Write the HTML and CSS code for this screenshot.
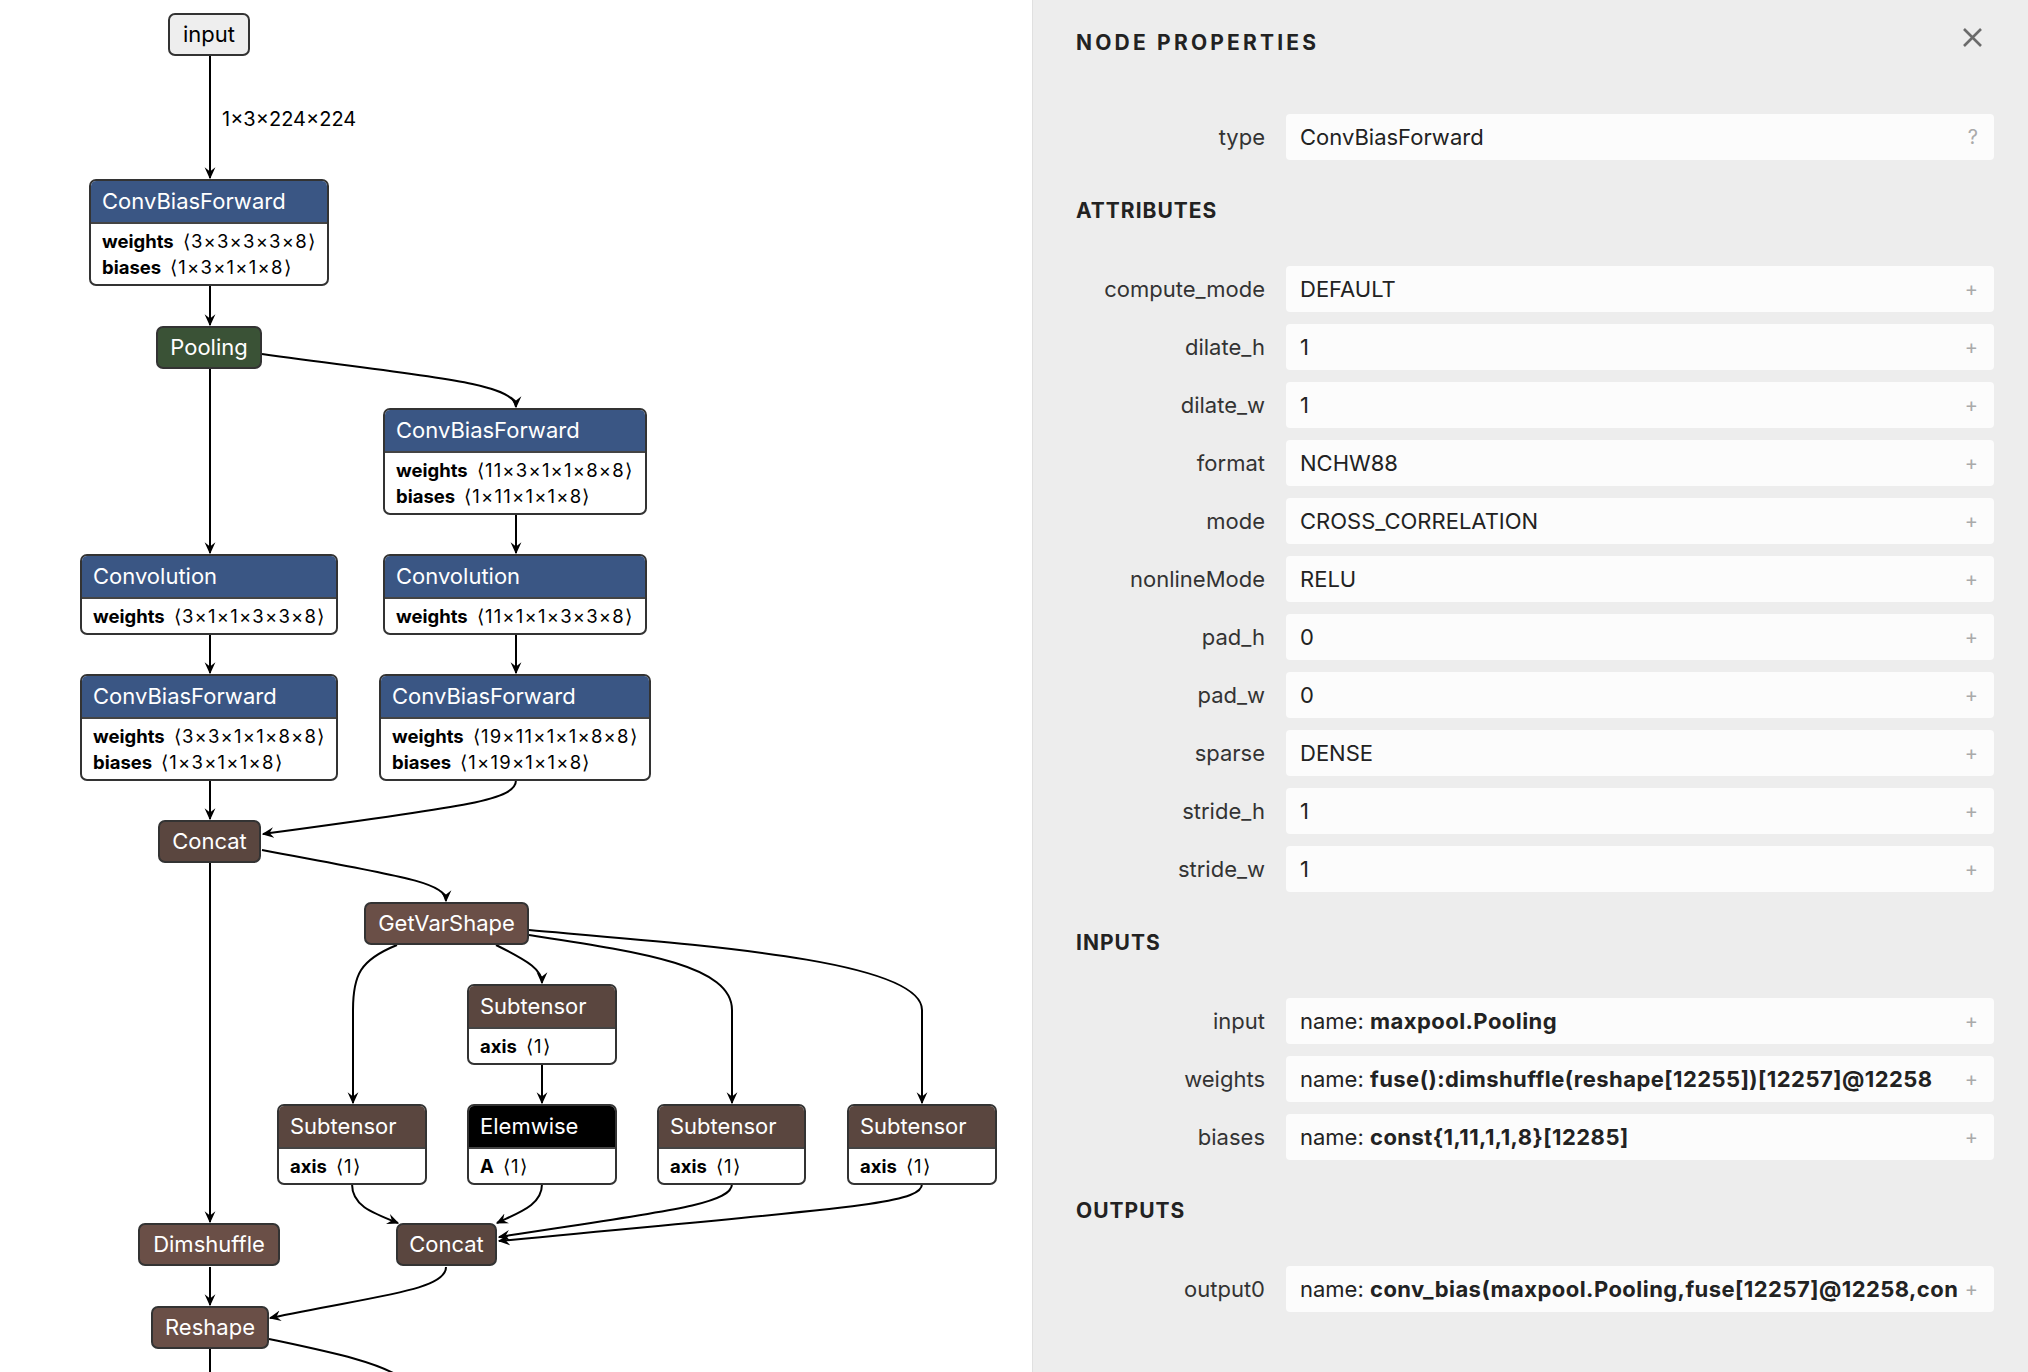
FILE: index.html
```html
<!DOCTYPE html>
<html lang="en">
<head>
    <meta charset="UTF-8">
    <title>Node Properties</title>
    <link rel="stylesheet" href="styles.css">
</head>
<body>
    <div class="app">
        <div class="graph">
            <svg class="edges" width="1032" height="1372" viewBox="0 0 1032 1372">
                <defs>
                    <marker id="arrow" viewBox="0 0 10 10" refX="9" refY="5" markerWidth="12" markerHeight="12" markerUnits="userSpaceOnUse" orient="auto">
                        <path d="M0,0.5 L10,5 L0,9.5 L3.5,5 z" fill="#000"/>
                    </marker>
                </defs>
                <g class="edge-lines" marker-end="url(#arrow)">
                    <path d="M210,56 L210,178"/>
                    <path d="M210,286 L210,325"/>
                    <path d="M210,369 L210,553"/>
                    <path d="M262,354 C420,376 516,382 516,407"/>
                    <path d="M516,514 L516,553"/>
                    <path d="M516,635 L516,673"/>
                    <path d="M210,635 L210,673"/>
                    <path d="M210,780 L210,819"/>
                    <path d="M516,780 C516,800 470,806 263,834"/>
                    <path d="M210,863 L210,1222"/>
                    <path d="M262,850 C400,876 446,882 446,901"/>
                    <path d="M397,945 C360,960 353,975 353,1010 L353,1103"/>
                    <path d="M496,945 C530,962 542,970 542,983"/>
                    <path d="M529,935 C640,952 732,965 732,1010 L732,1103"/>
                    <path d="M529,930 C700,945 922,960 922,1010 L922,1103"/>
                    <path d="M542,1064 L542,1103"/>
                    <path d="M352,1184 C352,1205 370,1212 398,1223"/>
                    <path d="M542,1184 C542,1205 520,1212 497,1223"/>
                    <path d="M732,1184 C732,1205 660,1212 499,1237"/>
                    <path d="M922,1184 C922,1205 840,1208 499,1241"/>
                    <path d="M210,1267 L210,1305"/>
                    <path d="M446,1267 C446,1290 380,1295 270,1318"/>
                </g>
                <g class="edge-lines">
                    <path d="M210,1349 L210,1380"/>
                    <path d="M269,1339 C330,1352 380,1362 405,1380"/>
                </g>
                <text class="edge-label" x="222" y="126">1×3×224×224</text>
            </svg>

            <div class="node node-simple c-input" style="left:168px;top:13px;width:82px">input</div>

            <div class="node" style="left:89px;top:179px;width:240px">
                <div class="node-head c-layer">ConvBiasForward</div>
                <div class="node-attrs">
                    <div><b>weights</b><span class="dim">⟨3×3×3×3×8⟩</span></div>
                    <div><b>biases</b><span class="dim">⟨1×3×1×1×8⟩</span></div>
                </div>
            </div>

            <div class="node node-simple c-pool" style="left:156px;top:326px;width:106px">Pooling</div>

            <div class="node" style="left:383px;top:408px;width:264px">
                <div class="node-head c-layer">ConvBiasForward</div>
                <div class="node-attrs">
                    <div><b>weights</b><span class="dim">⟨11×3×1×1×8×8⟩</span></div>
                    <div><b>biases</b><span class="dim">⟨1×11×1×1×8⟩</span></div>
                </div>
            </div>

            <div class="node" style="left:80px;top:554px;width:258px">
                <div class="node-head c-layer">Convolution</div>
                <div class="node-attrs">
                    <div><b>weights</b><span class="dim">⟨3×1×1×3×3×8⟩</span></div>
                </div>
            </div>

            <div class="node" style="left:383px;top:554px;width:264px">
                <div class="node-head c-layer">Convolution</div>
                <div class="node-attrs">
                    <div><b>weights</b><span class="dim">⟨11×1×1×3×3×8⟩</span></div>
                </div>
            </div>

            <div class="node" style="left:80px;top:674px;width:258px">
                <div class="node-head c-layer">ConvBiasForward</div>
                <div class="node-attrs">
                    <div><b>weights</b><span class="dim">⟨3×3×1×1×8×8⟩</span></div>
                    <div><b>biases</b><span class="dim">⟨1×3×1×1×8⟩</span></div>
                </div>
            </div>

            <div class="node" style="left:379px;top:674px;width:272px">
                <div class="node-head c-layer">ConvBiasForward</div>
                <div class="node-attrs">
                    <div><b>weights</b><span class="dim">⟨19×11×1×1×8×8⟩</span></div>
                    <div><b>biases</b><span class="dim">⟨1×19×1×1×8⟩</span></div>
                </div>
            </div>

            <div class="node node-simple c-tensor" style="left:158px;top:820px;width:103px">Concat</div>
            <div class="node node-simple c-shape" style="left:364px;top:902px;width:165px">GetVarShape</div>

            <div class="node" style="left:467px;top:984px;width:150px">
                <div class="node-head c-tensor">Subtensor</div>
                <div class="node-attrs"><div><b>axis</b><span class="dim">⟨1⟩</span></div></div>
            </div>

            <div class="node" style="left:277px;top:1104px;width:150px">
                <div class="node-head c-tensor">Subtensor</div>
                <div class="node-attrs"><div><b>axis</b><span class="dim">⟨1⟩</span></div></div>
            </div>

            <div class="node" style="left:467px;top:1104px;width:150px">
                <div class="node-head c-black">Elemwise</div>
                <div class="node-attrs"><div><b>A</b><span class="dim">⟨1⟩</span></div></div>
            </div>

            <div class="node" style="left:657px;top:1104px;width:149px">
                <div class="node-head c-tensor">Subtensor</div>
                <div class="node-attrs"><div><b>axis</b><span class="dim">⟨1⟩</span></div></div>
            </div>

            <div class="node" style="left:847px;top:1104px;width:150px">
                <div class="node-head c-tensor">Subtensor</div>
                <div class="node-attrs"><div><b>axis</b><span class="dim">⟨1⟩</span></div></div>
            </div>

            <div class="node node-simple c-shape" style="left:138px;top:1223px;width:142px">Dimshuffle</div>
            <div class="node node-simple c-tensor" style="left:396px;top:1223px;width:101px">Concat</div>
            <div class="node node-simple c-shape" style="left:151px;top:1306px;width:118px">Reshape</div>
        </div>

        <aside class="sidebar">
            <div class="sidebar-header">
                <div class="sidebar-title">NODE PROPERTIES</div>
                <svg class="close" width="21" height="21" viewBox="0 0 21 21">
                    <path d="M2,2 L19,19 M19,2 L2,19" stroke="#6b6b6b" stroke-width="2.6" fill="none"/>
                </svg>
            </div>

            <div class="prop-list first">
                <div class="prop">
                    <div class="prop-name">type</div>
                    <div class="prop-value"><span class="val">ConvBiasForward</span><span class="expander">?</span></div>
                </div>
            </div>

            <div class="section-title">ATTRIBUTES</div>
            <div class="prop-list">
                <div class="prop"><div class="prop-name">compute_mode</div><div class="prop-value"><span class="val">DEFAULT</span><span class="expander">+</span></div></div>
                <div class="prop"><div class="prop-name">dilate_h</div><div class="prop-value"><span class="val">1</span><span class="expander">+</span></div></div>
                <div class="prop"><div class="prop-name">dilate_w</div><div class="prop-value"><span class="val">1</span><span class="expander">+</span></div></div>
                <div class="prop"><div class="prop-name">format</div><div class="prop-value"><span class="val">NCHW88</span><span class="expander">+</span></div></div>
                <div class="prop"><div class="prop-name">mode</div><div class="prop-value"><span class="val">CROSS_CORRELATION</span><span class="expander">+</span></div></div>
                <div class="prop"><div class="prop-name">nonlineMode</div><div class="prop-value"><span class="val">RELU</span><span class="expander">+</span></div></div>
                <div class="prop"><div class="prop-name">pad_h</div><div class="prop-value"><span class="val">0</span><span class="expander">+</span></div></div>
                <div class="prop"><div class="prop-name">pad_w</div><div class="prop-value"><span class="val">0</span><span class="expander">+</span></div></div>
                <div class="prop"><div class="prop-name">sparse</div><div class="prop-value"><span class="val">DENSE</span><span class="expander">+</span></div></div>
                <div class="prop"><div class="prop-name">stride_h</div><div class="prop-value"><span class="val">1</span><span class="expander">+</span></div></div>
                <div class="prop"><div class="prop-name">stride_w</div><div class="prop-value"><span class="val">1</span><span class="expander">+</span></div></div>
            </div>

            <div class="section-title">INPUTS</div>
            <div class="prop-list">
                <div class="prop"><div class="prop-name">input</div><div class="prop-value"><span class="val">name: <b>maxpool.Pooling</b></span><span class="expander">+</span></div></div>
                <div class="prop"><div class="prop-name">weights</div><div class="prop-value"><span class="val">name: <b>fuse():dimshuffle(reshape[12255])[12257]@12258</b></span><span class="expander">+</span></div></div>
                <div class="prop"><div class="prop-name">biases</div><div class="prop-value"><span class="val">name: <b>const{1,11,1,1,8}[12285]</b></span><span class="expander">+</span></div></div>
            </div>

            <div class="section-title">OUTPUTS</div>
            <div class="prop-list">
                <div class="prop"><div class="prop-name">output0</div><div class="prop-value"><span class="val">name: <b>conv_bias(maxpool.Pooling,fuse[12257]@12258,con</b></span><span class="expander">+</span></div></div>
            </div>
        </aside>
    </div>
</body>
</html>
```

FILE: styles.css
```css
body {
    margin: 0;
    padding: 0;
    font-family: Inter, "Noto Sans", sans-serif;
    color: #000;
    background-color: #fff;
}
.app {
    display: flex;
    width: 2028px;
    height: 1372px;
    overflow: hidden;
}

/* graph canvas */
.graph {
    position: relative;
    width: 1032px;
    height: 1372px;
    flex-shrink: 0;
    overflow: hidden;
    background-color: #fff;
}
.edges {
    position: absolute;
    left: 0;
    top: 0;
}
.edge-lines path {
    fill: none;
    stroke: #000;
    stroke-width: 2;
}
.edge-label {
    font-family: Inter, sans-serif;
    font-size: 20px;
    fill: #000;
}
.node {
    position: absolute;
    box-sizing: border-box;
    border: 2px solid #333;
    border-radius: 7px;
    overflow: hidden;
    background-color: #fff;
}
.node-simple {
    height: 43px;
    line-height: 39px;
    text-align: center;
    font-size: 22px;
    color: #fff;
    white-space: nowrap;
}
.node-head {
    height: 41px;
    line-height: 40px;
    padding: 0 11px;
    font-size: 22px;
    color: #fff;
    white-space: nowrap;
}
.node-attrs {
    border-top: 2px solid #444;
    padding: 4px 11px;
    font-size: 18.5px;
    line-height: 26px;
    white-space: nowrap;
}
.node-attrs b {
    font-weight: 700;
    margin-right: 9px;
}
.dim {
    letter-spacing: 1.2px;
}
.c-input {
    background-color: #eee;
    color: #000;
}
.c-layer {
    background-color: #3a5684;
}
.c-pool {
    background-color: #3a5236;
}
.c-tensor {
    background-color: #5a463f;
}
.c-shape {
    background-color: #6a4f47;
}
.c-black {
    background-color: #000;
}

/* sidebar */
.sidebar {
    width: 996px;
    box-sizing: border-box;
    padding: 28px 34px 0 43px;
    background-color: #ededed;
    border-left: 1px solid #e0e0e0;
    font-size: 22px;
    color: #222;
}
.sidebar-header {
    display: flex;
    justify-content: space-between;
    align-items: flex-start;
}
.sidebar-title,
.section-title {
    font-weight: 700;
    font-size: 21px;
    letter-spacing: 1px;
    line-height: 30px;
    color: #222;
}
.sidebar-title {
    letter-spacing: 3.2px;
}
.close {
    margin-top: -1px;
    margin-right: 11px;
}
.section-title {
    margin: 36px 0 40px 0;
}
.prop-list {
    display: flex;
    flex-direction: column;
    gap: 12px;
}
.prop-list.first {
    margin-top: 56px;
}
.prop {
    display: flex;
    align-items: center;
    gap: 21px;
}
.prop-name {
    width: 189px;
    flex-shrink: 0;
    text-align: right;
    color: #333;
    white-space: nowrap;
}
.prop-value {
    flex: 1;
    min-width: 0;
    height: 46px;
    display: flex;
    align-items: center;
    padding: 0 16px 0 14px;
    background-color: #fcfcfc;
    border-radius: 4px;
}
.val {
    flex: 1;
    min-width: 0;
    overflow: hidden;
    white-space: nowrap;
}
.val b {
    font-weight: 700;
    letter-spacing: 0.45px;
}
.expander {
    margin-left: 6px;
    color: #aaa;
    font-size: 20px;
}
```
